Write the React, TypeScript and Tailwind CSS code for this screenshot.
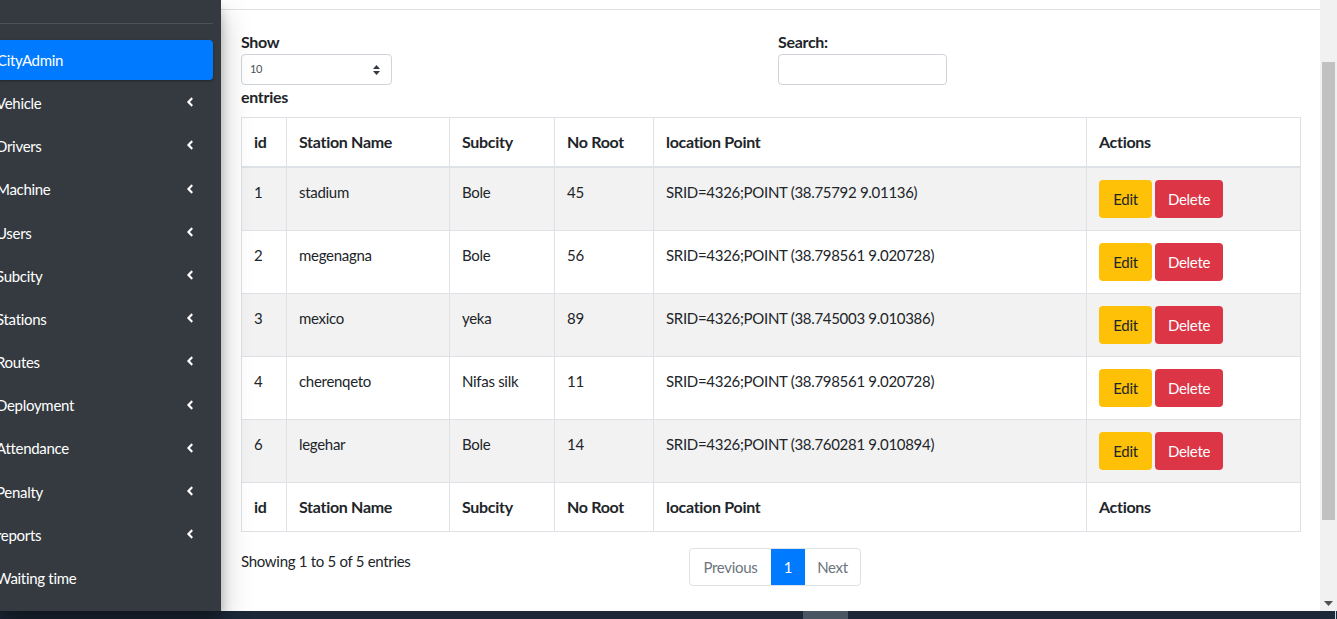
import React from "react";
import { FaAngleLeft } from "react-icons/fa";

const menu = [
  "Vehicle",
  "Drivers",
  "Machine",
  "Users",
  "Subcity",
  "Stations",
  "Routes",
  "Deployment",
  "Attendance",
  "Penalty",
  "reports",
];

const rows = [
  ["1", "stadium", "Bole", "45", "SRID=4326;POINT (38.75792 9.01136)"],
  ["2", "megenagna", "Bole", "56", "SRID=4326;POINT (38.798561 9.020728)"],
  ["3", "mexico", "yeka", "89", "SRID=4326;POINT (38.745003 9.010386)"],
  ["4", "cherenqeto", "Nifas silk", "11", "SRID=4326;POINT (38.798561 9.020728)"],
  ["6", "legehar", "Bole", "14", "SRID=4326;POINT (38.760281 9.010894)"],
];

const heads = ["id", "Station Name", "Subcity", "No Root", "location Point", "Actions"];

function HeadRow({ top }: { top?: boolean }) {
  return (
    <tr className={top ? "border-b-2 border-[#dee2e6]" : ""}>
      {heads.map((h) => (
        <th
          key={h}
          className="border border-[#dee2e6] px-3 py-3 text-left align-top text-[16px] font-bold leading-6 tracking-[-0.3px]"
        >
          {h}
        </th>
      ))}
    </tr>
  );
}

export default function App() {
  return (
    <div
      className="flex h-[619px] w-[1337px] flex-col overflow-hidden bg-white text-[15px] tracking-[-0.3px] text-[#212529]"
      style={{ fontFamily: "Lato, 'Open Sans', sans-serif" }}
    >
      <div className="flex min-h-0 flex-1">
        {/* Sidebar */}
        <aside className="relative z-10 w-[221px] shrink-0 overflow-hidden bg-[#343a40] pr-2 shadow-[0_14px_28px_rgba(0,0,0,0.25),0_10px_10px_rgba(0,0,0,0.22)]">
          <div className="mt-[23px] h-px bg-[#4b545c]" />
          <nav className="mt-4 flex flex-col">
            <div className="mb-[3.2px] flex h-10 items-center rounded-r-[4px] bg-[#007bff] text-white shadow-[0_1px_3px_rgba(0,0,0,0.12),0_1px_2px_rgba(0,0,0,0.24)]">
              <span className="-ml-[3px]">CityAdmin</span>
            </div>
            {menu.map((m) => (
              <div
                key={m}
                className="mb-[3.2px] flex h-10 items-center justify-between pr-4 text-white"
              >
                <span className="-ml-[4px]">{m}</span>
                <FaAngleLeft className="-mt-[2px] text-[14px] text-white" />
              </div>
            ))}
            <div className="mb-[3.2px] flex h-10 items-center text-white">
              <span className="-ml-[4px]">Waiting time</span>
            </div>
          </nav>
        </aside>

        {/* Main */}
        <main className="min-w-0 flex-1 bg-white">
          <div className="h-[10px] border-b border-[#dee2e6]" />
          <div className="pl-5 pr-[21px] pt-5">
            <div className="grid grid-cols-2">
              <div>
                <label className="block text-[16px] font-bold leading-6">Show</label>
                <div className="flex h-[31px] w-[151px] items-center justify-between rounded-[4px] border border-[#ced4da] pl-2 pr-[10px]">
                  <span className="text-[11px] text-[#495057]">10</span>
                  <svg width="9" height="12" viewBox="0 0 9 12">
                    <path d="M4.5 1 L8 5 H1 Z" fill="#343a40" />
                    <path d="M4.5 11 L8 7 H1 Z" fill="#343a40" />
                  </svg>
                </div>
                <label className="block text-[16px] font-bold leading-6">entries</label>
              </div>
              <div className="pl-2">
                <label className="block text-[16px] font-bold leading-6">Search:</label>
                <div className="h-[31px] w-[169px] rounded-[4px] border border-[#ced4da]" />
              </div>
            </div>

            <table className="mt-2 w-[1059px] table-fixed border-collapse border border-[#dee2e6]">
              <colgroup>
                <col className="w-[45px]" />
                <col className="w-[163px]" />
                <col className="w-[105px]" />
                <col className="w-[99px]" />
                <col className="w-[433px]" />
                <col className="w-[214px]" />
              </colgroup>
              <thead>
                <HeadRow top />
              </thead>
              <tbody>
                {rows.map((r, i) => (
                  <tr key={r[0]} className={i % 2 === 0 ? "bg-[#f2f2f2]" : "bg-white"}>
                    {r.map((c, j) => (
                      <td
                        key={j}
                        className="border border-[#dee2e6] px-3 py-3 align-top leading-6"
                      >
                        {c}
                      </td>
                    ))}
                    <td className="border border-[#dee2e6] px-3 py-3 align-top">
                      <div className="flex gap-[3px]">
                        <button className="h-[38px] w-[53px] rounded-[4px] bg-[#ffc107] text-[#212529]">
                          Edit
                        </button>
                        <button className="h-[38px] w-[68px] rounded-[4px] bg-[#dc3545] text-white">
                          Delete
                        </button>
                      </div>
                    </td>
                  </tr>
                ))}
              </tbody>
              <tfoot>
                <HeadRow />
              </tfoot>
            </table>

            <div className="mt-[17px] flex items-start">
              <div className="w-[448px] leading-6">Showing 1 to 5 of 5 entries</div>
              <div className="mt-[-1px] flex h-[38px] overflow-hidden rounded-[4px] border border-[#dee2e6]">
                <div className="flex w-[81px] items-center justify-center text-[#6c757d]">
                  Previous
                </div>
                <div className="flex w-[34px] items-center justify-center bg-[#007bff] text-white">
                  1
                </div>
                <div className="flex w-[55px] items-center justify-center text-[#6c757d]">
                  Next
                </div>
              </div>
            </div>
          </div>
        </main>

        {/* Scrollbar */}
        <div className="relative w-[17px] shrink-0 bg-[#f1f1f1]">
          <div className="absolute left-[2px] top-[62px] h-[458px] w-[13px] bg-[#c1c1c1]" />
          <svg className="absolute bottom-[5px] left-[4px]" width="9" height="5" viewBox="0 0 9 5">
            <path d="M0 0 H9 L4.5 5 Z" fill="#505050" />
          </svg>
        </div>
      </div>

      {/* Taskbar strip */}
      <div className="relative h-[8px] shrink-0 bg-[#1c2838]">
        <div className="absolute left-[803px] top-0 h-full w-[45px] bg-[#4a5662]" />
        <div className="absolute left-[1335px] top-0 h-full w-px bg-[#cfd4da]" />
      </div>
    </div>
  );
}
